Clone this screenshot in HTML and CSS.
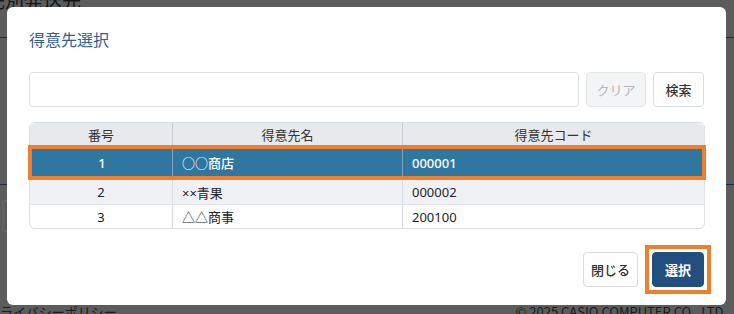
FILE: index.html
```html
<!DOCTYPE html>
<html lang="ja">

<head>
    <meta charset="UTF-8">
    <meta name="viewport" content="width=device-width, initial-scale=1.0">
    <title>得意先選択</title>
    <link rel="stylesheet" href="styles.css">
</head>

<body>
    <!-- 後ろのページ（オーバーレイ越し） -->
    <div class="behind">
        <p class="behind-title">先別発送先</p>
        <div class="behind-line line-top"></div>
        <div class="behind-line line-mid"></div>
        <div class="behind-box"></div>
        <div class="behind-footer">
            <span>ライバシーポリシー</span>
            <span>© 2025 CASIO COMPUTER CO., LTD.</span>
        </div>
    </div>

    <div class="modal">
        <h2 class="modal-title">得意先選択</h2>

        <div class="search">
            <input class="search-input" type="text">
            <button class="btn btn-clear" disabled>クリア</button>
            <button class="btn btn-search">検索</button>
        </div>

        <div class="list">
            <div class="list-row list-head">
                <div class="cell center">番号</div>
                <div class="cell center">得意先名</div>
                <div class="cell center">得意先コード</div>
            </div>
            <div class="list-row selected">
                <div class="cell center">1</div>
                <div class="cell">○○商店</div>
                <div class="cell">000001</div>
            </div>
            <div class="list-row striped">
                <div class="cell center">2</div>
                <div class="cell">××青果</div>
                <div class="cell">000002</div>
            </div>
            <div class="list-row">
                <div class="cell center">3</div>
                <div class="cell">△△商事</div>
                <div class="cell">200100</div>
            </div>
        </div>

        <div class="modal-footer">
            <button class="btn btn-close">閉じる</button>
            <span class="focus-ring">
                <button class="btn btn-primary">選択</button>
            </span>
        </div>
    </div>
</body>

</html>
```

FILE: styles.css
```css
* {
    box-sizing: border-box;
}

body {
    margin: 0;
    padding: 7px;
    width: 734px;
    height: 314px;
    overflow: hidden;
    background: #5c5c5c;
    font-family: "Noto Sans", "Noto Sans CJK JP", sans-serif;
    color: #212529;
    position: relative;
}

/* 後ろのページ */
.behind {
    position: absolute;
    inset: 0;
}

.behind-title {
    position: absolute;
    left: -14px;
    top: -14px;
    margin: 0;
    font-size: 19px;
    color: #161616;
    font-family: "Noto Sans CJK JP", sans-serif;
}

.behind-line {
    position: absolute;
    left: 0;
    right: 0;
    height: 1px;
    background: #1f2b3d;
}

.line-top {
    top: 37px;
}

.line-mid {
    top: 184px;
}

.behind-box {
    position: absolute;
    left: 3px;
    top: 200px;
    width: 10px;
    height: 32px;
    border: 1px solid #6a6a6a;
    border-radius: 3px;
}

.behind-footer {
    position: absolute;
    left: 0;
    right: 7px;
    top: 302px;
    display: flex;
    justify-content: space-between;
    font-size: 13px;
    color: #1a1a1a;
    font-family: "Noto Sans CJK JP", sans-serif;
}

/* モーダル */
.modal {
    position: relative;
    width: 719px;
    height: 298px;
    background: #fff;
    border-radius: 6px;
    padding: 20px 21px 0 22px;
}

.modal-title {
    margin: 0;
    font-size: 16px;
    line-height: 24px;
    font-weight: 400;
    color: #35608f;
    font-family: "Noto Sans CJK JP", sans-serif;
}

.search {
    display: flex;
    gap: 7px;
    margin-top: 21px;
    height: 35px;
}

.search-input {
    width: 550px;
    border: 1px solid #dfe1e5;
    border-radius: 4px;
}

.btn {
    appearance: none;
    height: 35px;
    padding: 0;
    border: 1px solid #dadde2;
    border-radius: 4px;
    background: #fff;
    color: #333;
    font-size: 13px;
    font-family: "Noto Sans CJK JP", sans-serif;
    font-weight: 500;
    white-space: nowrap;
    cursor: pointer;
}

.btn-clear {
    width: 60px;
    background: #f3f4f6;
    border-color: #e5e7eb;
    color: #b3b6bb;
    font-weight: 400;
}

.btn-search {
    width: 51px;
}

/* 一覧 */
.list {
    margin-top: 15px;
    border: 1px solid #dcdfe3;
    border-radius: 6px;
    font-size: 13px;
}

.list-row {
    display: grid;
    grid-template-columns: 142px 230px 1fr;
    height: 24px;
    border-top: 1px solid #e2e4e8;
}

.list-row .cell {
    display: flex;
    align-items: center;
    padding: 0 9px;
    border-left: 1px solid #d8dbe0;
}

.list-row .cell:first-child {
    border-left: none;
}

.list-row .center {
    justify-content: center;
}

.list-head {
    height: 22px;
    border-top: none;
    background: #e8e9ed;
    border-radius: 6px 6px 0 0;
    color: #333;
}

.list-head .cell {
    border-left-color: #c9ccd2;
}

.selected {
    grid-template-columns: 140px 230px 1fr;
    height: 35px;
    margin: 0 -2px;
    border: 4px solid #ef7f2f;
    background: #2f76a1;
    color: #fff;
    font-weight: 500;
}

.selected .cell {
    border-left-color: #7aa6c2;
}

.striped {
    background: #f0f1f5;
    border-top: none;
}

.modal-footer {
    display: flex;
    justify-content: flex-end;
    align-items: center;
    gap: 7px;
    margin-top: 16px;
    margin-right: -6px;
}

.btn-close {
    width: 55px;
}

.focus-ring {
    display: flex;
    padding: 3px;
    border: 4px solid #ef7f2f;
}

.btn-primary {
    width: 52px;
    background: #234f80;
    border-color: #234f80;
    color: #fff;
    font-weight: 700;
}
```
